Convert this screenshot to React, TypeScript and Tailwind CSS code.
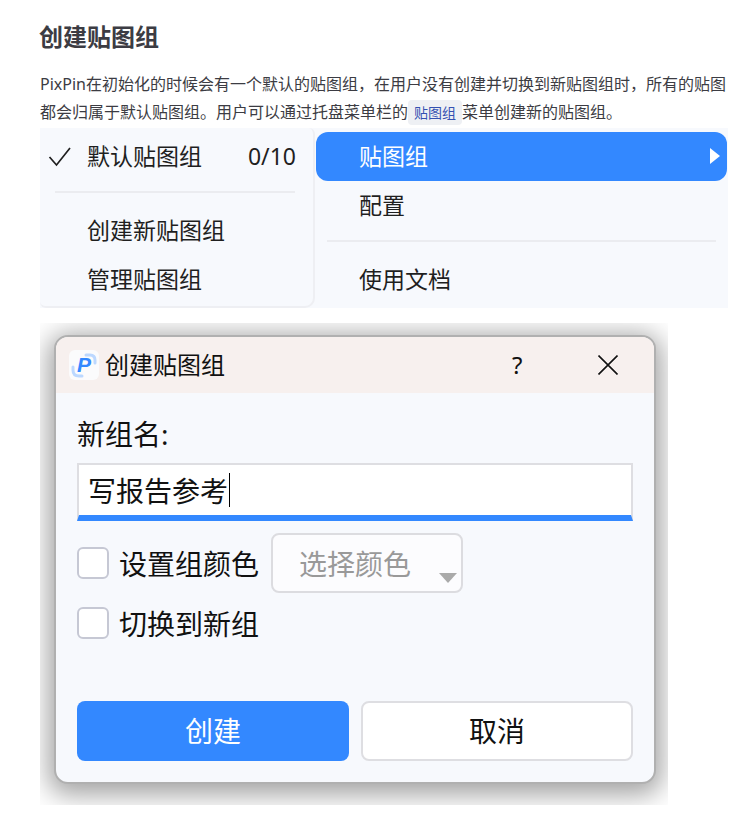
const font = { fontFamily: '"Noto Sans", "Noto Sans CJK SC", sans-serif' };

function MenuSeparator({ className }: { className: string }) {
  return <div className={`h-[2px] bg-[#ebecf0] ${className}`} />;
}

function PixPinLogo() {
  return (
    <svg width="30" height="30" viewBox="0 0 30 30" className="shrink-0">
      <rect x="0" y="0" width="30" height="30" rx="6" fill="#fbfbfc" />
      <path d="M17 5 H21 Q26 5 26 10 V13" fill="none" stroke="#bcd8ff" strokeWidth="3" strokeLinecap="round" />
      <path d="M4 17 V20 Q4 26 10 26 H13" fill="none" stroke="#bcd8ff" strokeWidth="3" strokeLinecap="round" />
      <text x="15" y="22" textAnchor="middle" fontSize="21" fontWeight="800" fontStyle="italic" fill="#3388ff" fontFamily="Liberation Sans, sans-serif">P</text>
    </svg>
  );
}

function CheckRow({ label, children, className }: { label: string; children?: React.ReactNode; className?: string }) {
  return (
    <div className={`flex items-center ${className ?? ''}`}>
      <div className="w-8 h-8 shrink-0 bg-white border-2 border-[#c6c8d4] rounded-md" />
      <span className="ml-[10px] pt-[2px] text-[28px] leading-[40px] text-[#111]">{label}</span>
      {children}
    </div>
  );
}

export default function App() {
  return (
    <div className="w-[735px] h-[813px] bg-white overflow-hidden pl-10" style={font}>
      <h1 className="pt-[19px] -ml-px text-[24px] leading-[36px] font-bold text-[#3c3c43]">创建贴图组</h1>
      <p className="mt-[15px] w-[690px] text-[16px] leading-[28px] text-[#3c3c43]">
        PixPin在初始化的时候会有一个默认的贴图组，在用户没有创建并切换到新贴图组时，所有的贴图都会归属于默认贴图组。用户可以通过托盘菜单栏的<code className="bg-[#eef0f4] text-[#3451b2] text-[14px] px-[6px] py-[3px] rounded" style={font}>贴图组</code>菜单创建新的贴图组。
      </p>

      {/* tray menu picture */}
      <div className="mt-[1px] w-[688px] h-[180px] flex bg-[#f7f9fd] text-[23px] leading-[49px] text-[#1f1f1f]">
        <div className="w-[275px] h-full pt-[4px] border-r-2 border-b-2 border-[#eeeff3] rounded-br-[10px] rounded-tr-[6px] rounded-bl-[6px]">
          <div className="relative h-[49px] pl-[47px] pr-[17px] flex justify-between">
            <svg width="24" height="24" viewBox="0 0 24 24" className="absolute left-[8px] top-[13px]">
              <path d="M1.5 12 L8.5 20 L22 3" fill="none" stroke="#1f1f1f" strokeWidth="1.7" />
            </svg>
            <span>默认贴图组</span>
            <span>0/10</span>
          </div>
          <MenuSeparator className="mt-[10px] mb-[13px] ml-[15px] mr-[18px]" />
          <div className="pl-[47px]">创建新贴图组</div>
          <div className="pl-[47px]">管理贴图组</div>
        </div>
        <div className="flex-1 pt-[4px]">
          <div className="relative h-[49px] ml-[1px] mr-[1px] pl-[43px] bg-[#3388ff] rounded-[12px] text-white">
            贴图组
            <div className="absolute right-[7px] top-[16px] w-0 h-0 border-y-[8px] border-y-transparent border-l-[10px] border-l-white" />
          </div>
          <div className="pl-[44px]">配置</div>
          <MenuSeparator className="mt-[10px] mb-[13px] ml-[12px] mr-[12px]" />
          <div className="pl-[44px]">使用文档</div>
        </div>
      </div>

      {/* dialog picture */}
      <div className="mt-[15px] w-[628px] h-[482px] overflow-hidden bg-white pl-[14px] pt-[12px]">
        <div className="w-[602px] h-[449px] rounded-[14px] border-2 border-[#b0b0b0] overflow-hidden bg-[#f7f9fd] shadow-[0_5px_26px_6px_rgba(0,0,0,0.36)]">
          <div className="h-[56px] bg-[#f7f0ee] flex items-center pl-[13px] text-[#111]">
            <PixPinLogo />
            <span className="ml-[6px] text-[24px] leading-[32px]">创建贴图组</span>
            <span className="ml-[287px] text-[24px] leading-[32px]">?</span>
            <svg width="20" height="20" viewBox="0 0 20 20" className="ml-[76px]">
              <path d="M0.5 0.5 L19.5 19.5 M19.5 0.5 L0.5 19.5" fill="none" stroke="#111" strokeWidth="1.6" />
            </svg>
          </div>
          <div className="px-[21px]">
            <div className="pt-[21px] text-[28px] leading-[40px] text-[#111]">新组名:</div>
            <div className="mt-[9px] h-[58px] bg-white border-2 border-b-[6px] border-[#dedee2] border-b-[#3388ff] pl-[9px] flex items-center">
              <span className="pt-[2px] text-[28px] leading-[40px] text-[#111]">写报告参考</span>
              <div className="w-px h-[34px] bg-black ml-px" />
            </div>
            <CheckRow label="设置组颜色" className="mt-[12px]">
              <div className="relative ml-[12px] w-[192px] h-[60px] bg-[#fcfcfe] border-2 border-[#dcdce0] rounded-lg pl-[26px] flex items-center">
                <span className="pt-[2px] text-[28px] leading-[40px] text-[#999]">选择颜色</span>
                <div className="absolute right-[4px] bottom-[8px] w-0 h-0 border-x-[9px] border-x-transparent border-t-[10px] border-t-[#aaa]" />
              </div>
            </CheckRow>
            <CheckRow label="切换到新组" className="mt-[9px]" />
            <div className="mt-[57px] flex gap-3">
              <div className="w-[272px] h-[60px] bg-[#3388ff] rounded-lg text-white text-[28px] flex items-center justify-center">创建</div>
              <div className="w-[272px] h-[60px] bg-white border-2 border-[#dedee2] rounded-lg text-[#111] text-[28px] flex items-center justify-center">取消</div>
            </div>
          </div>
        </div>
      </div>
    </div>
  );
}
